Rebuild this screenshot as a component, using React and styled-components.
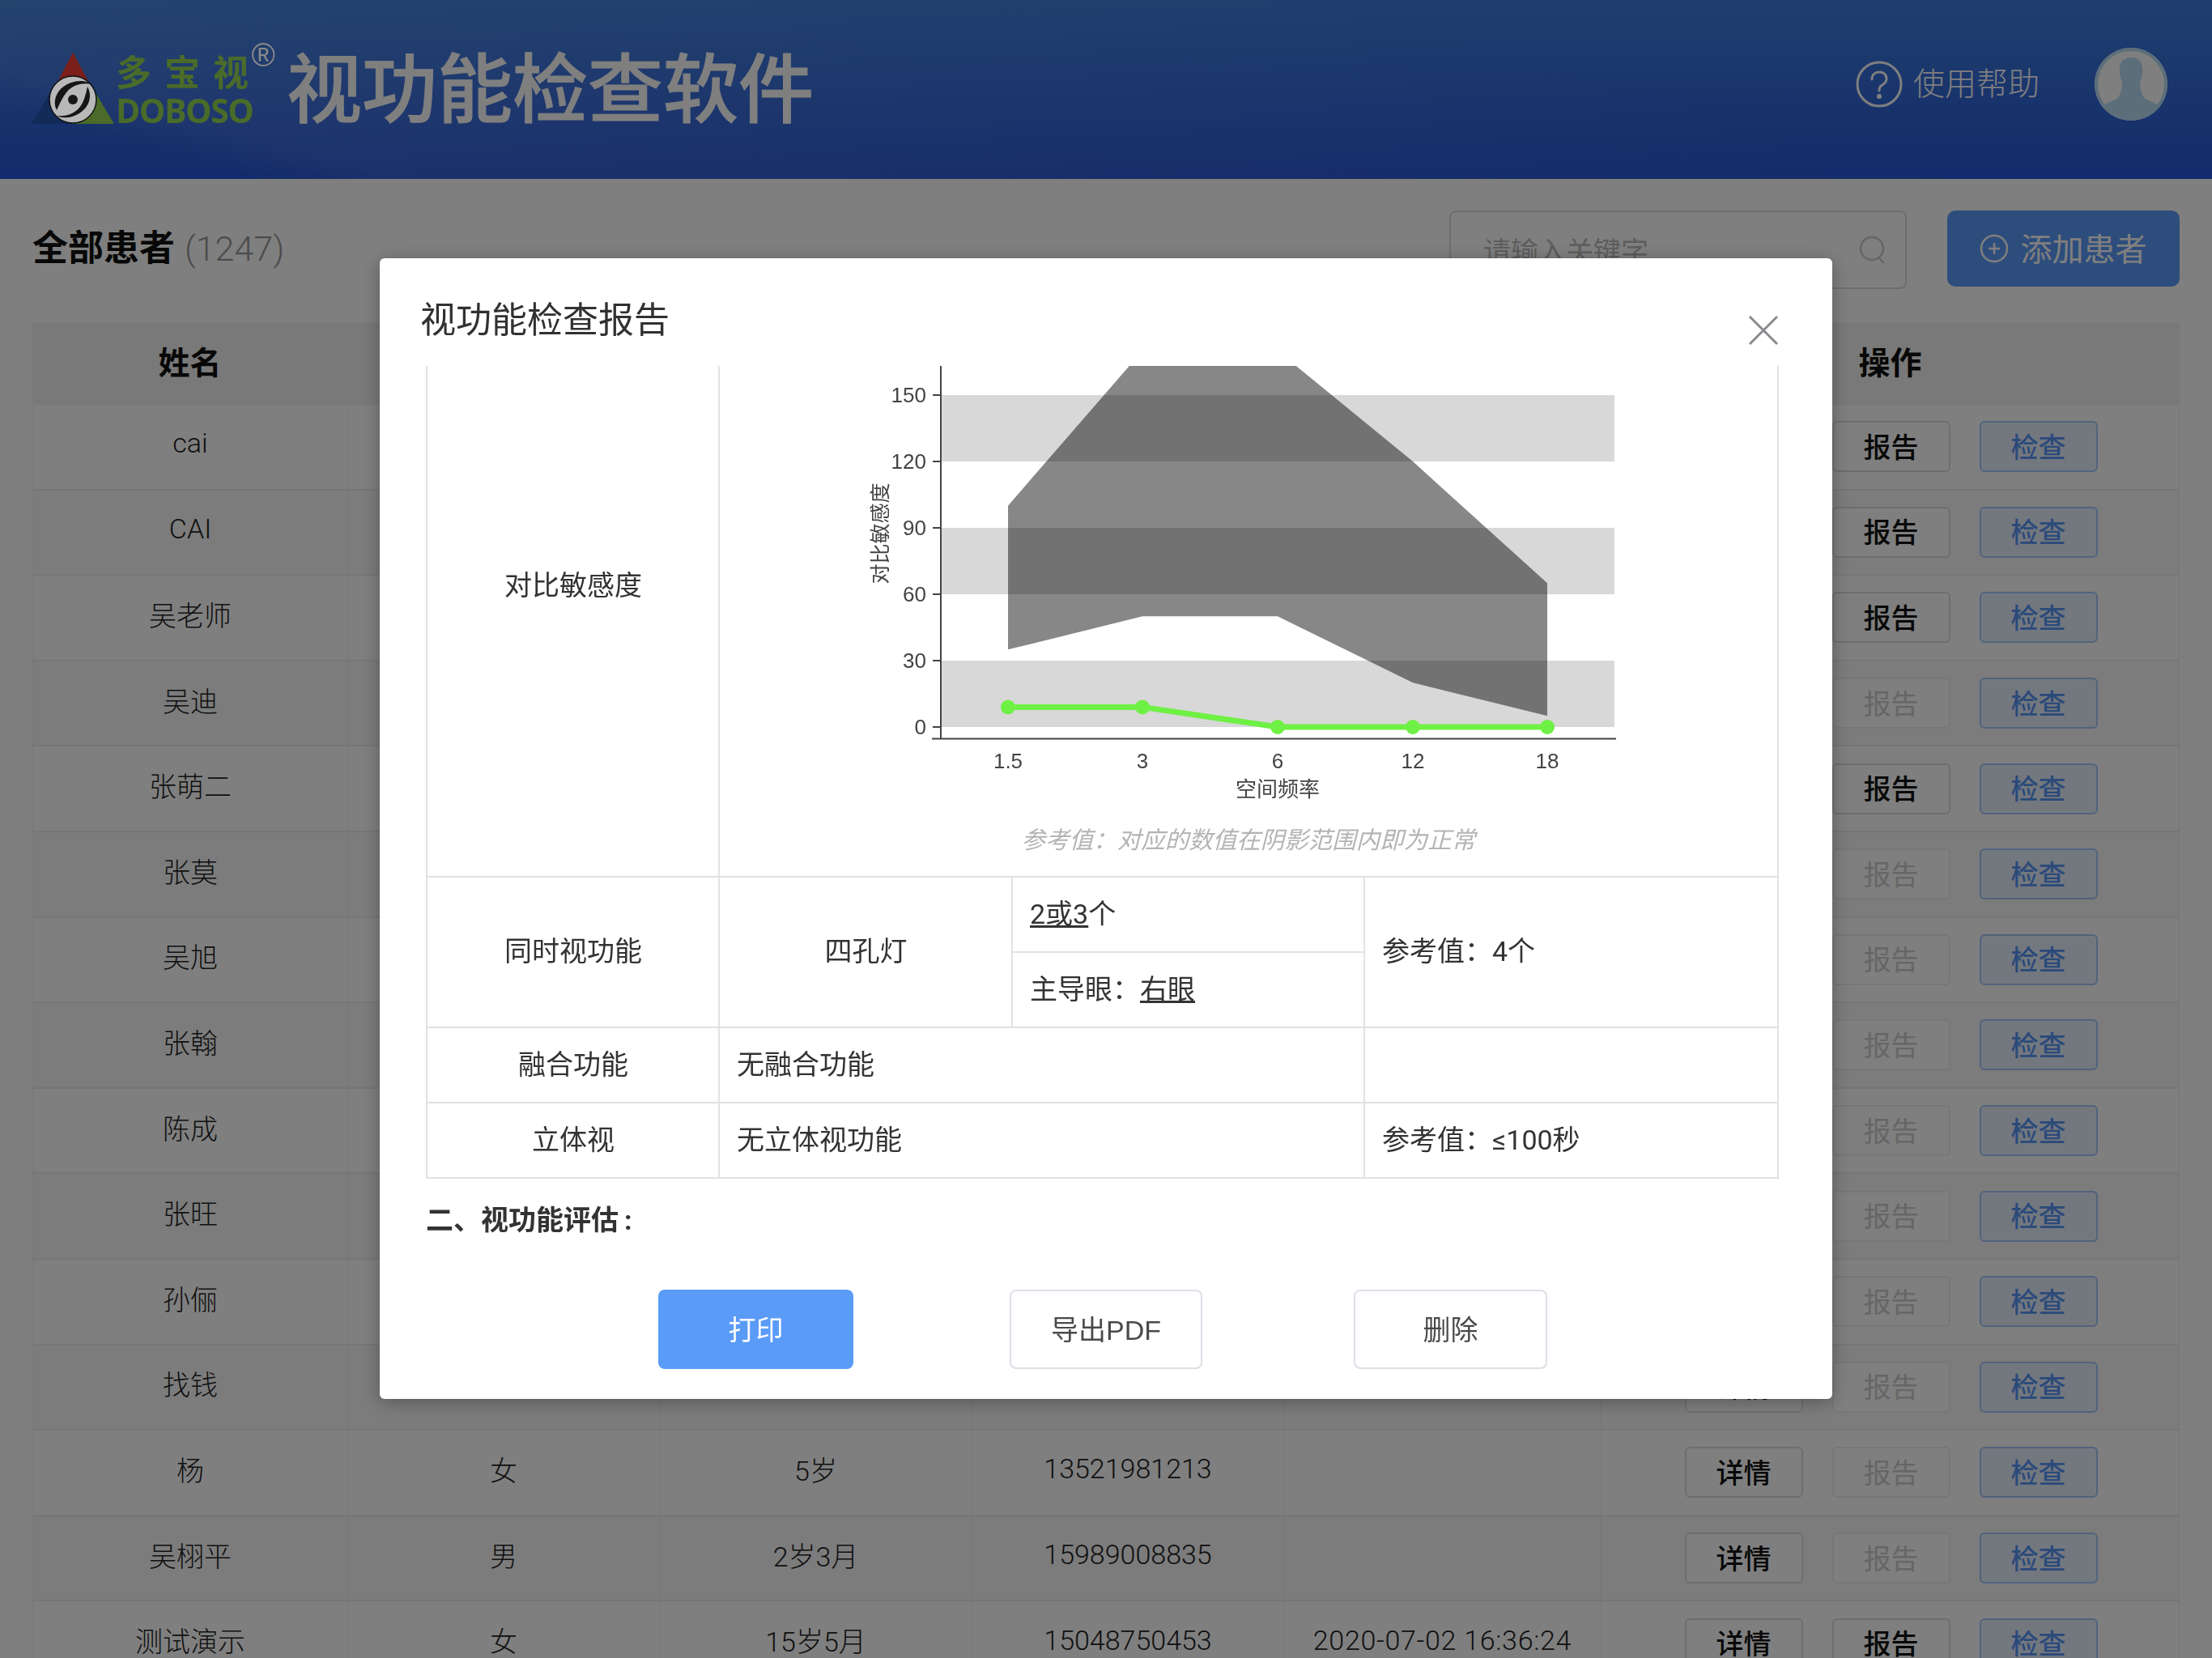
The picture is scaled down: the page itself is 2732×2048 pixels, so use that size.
import React from 'react'
import styled, { createGlobalStyle } from 'styled-components'

const GlobalStyle = createGlobalStyle`
    html, body {
        margin: 0;
        padding: 0;
        background: #fff;
    }
    body {
        width: 2732px;
        height: 2048px;
        overflow: hidden;
        font-family: Roboto, "Noto Sans CJK SC", sans-serif;
        color: #333;
    }
    * {
        box-sizing: border-box;
    }
`

const Page = styled.div`
    width: 2732px;
    height: 2048px;
    overflow: hidden;
`

const Header = styled.header`
    height: 221px;
    padding: 0 0 14px 39px;
    display: flex;
    align-items: center;
    background:
        linear-gradient(195.6deg, rgba(255,255,255,0) 30%, rgba(255,255,255,.07) 86%, rgba(255,255,255,0) 91%),
        linear-gradient(180deg, #3f7fdc 0%, #2756d6 100%);
`

const Logo = styled.div`
    display: flex;
    align-items: flex-end;
    position: relative;
    z-index: 2;
    height: 88px;
    margin: 11px 39px 0 0;
`

const LogoWords = styled.div`
    margin: 0 0 -1px 1px;
    width: 172px;
    color: #4a6b2a;
    font-weight: 700;
`

const LogoCn = styled.div`
    font-size: 44px;
    line-height: 54px;
    letter-spacing: 16px;
    white-space: nowrap;
`

const LogoEn = styled.div`
    font-family: "Open Sans", sans-serif;
    font-size: 41px;
    line-height: 36px;
    letter-spacing: -1.5px;
`

const Registered = styled.span`
    position: absolute;
    right: -25px;
    top: -20px;
    font-size: 40px;
    line-height: 46px;
    color: #8a8a8a;
    font-family: "Liberation Sans", sans-serif;
`

const AppName = styled.h1`
    margin: 0;
    font-size: 93px;
    line-height: 110px;
    font-weight: 500;
    color: #fff;
    -webkit-text-stroke: 1px #fff;
    font-family: "Noto Sans CJK SC", sans-serif;
`

const HeaderRight = styled.div`
    margin-left: auto;
    display: flex;
    align-items: center;
    padding-right: 55px;
`

const HelpLink = styled.div`
    display: flex;
    align-items: center;
    gap: 13px;
    color: #fff;
    font-size: 39px;
    margin-right: 68px;
    font-weight: 300;
`

const HelpLabel = styled.span`
    margin-bottom: 8px;
`

const Avatar = styled.div`
    width: 90px;
    height: 90px;
    border-radius: 50%;
    overflow: hidden;
`

const Content = styled.main`
    padding: 39px 40px 0;
`

const TopBar = styled.div`
    display: flex;
    align-items: flex-start;
    height: 138px;
`

const PageTitle = styled.div`
    display: flex;
    align-items: baseline;
    gap: 12px;
    margin-top: 17px;
    font-size: 44px;
    line-height: 60px;
    font-weight: 700;
    color: #111;
`

const Count = styled.span`
    font-size: 43px;
    font-weight: 300;
    color: #999;
`

const SearchBox = styled.div`
    margin-left: auto;
    width: 565px;
    height: 97px;
    padding: 0 23px 0 40px;
    border: 2px solid #ddd;
    border-radius: 8px;
    display: flex;
    align-items: center;
    justify-content: space-between;
    font-size: 34px;
    color: #bbb;
`

const AddButton = styled.div`
    width: 287px;
    height: 94px;
    margin-left: 50px;
    border-radius: 10px;
    background: #5b9bf8;
    color: #fff;
    display: flex;
    align-items: center;
    justify-content: center;
    gap: 14px;
    font-size: 39px;
`

const AddLabel = styled.span`
    margin-bottom: 4px;
`

const TableHead = styled.div`
    display: grid;
    grid-template-columns: 389px 385px 386px 385px 392px 715px;
    height: 102px;
    padding-bottom: 8px;
    background: #f2f2f2;
    align-items: center;
    text-align: center;
    font-size: 39px;
    font-weight: 700;
    color: #111;
`

const Row = styled.div`
    display: grid;
    grid-template-columns: 389px 385px 386px 385px 392px 715px;
    height: 105.6px;
    background: ${props => (props.$alt ? '#f8f8f8' : '#fff')};
    border-bottom: 2px solid #ebedf3;
    border-left: 1px solid #f0f0f4;
    border-right: 1px solid #f0f0f4;
`

const Cell = styled.div`
    display: flex;
    align-items: center;
    justify-content: center;
    padding-bottom: 9px;
    border-right: 1px solid #ebedf3;
    font-size: 34px;
    font-weight: 300;
    letter-spacing: ${props => (props.$wide ? '.7px' : '0')};
    color: #222;
`

const Actions = styled.div`
    display: flex;
    align-items: center;
    justify-content: center;
    gap: 36px;
`

const SmallButton = styled.div`
    width: 146px;
    height: 63px;
    padding-bottom: 3px;
    border-radius: 6px;
    border: 2px solid ${props => (props.$kind === 'blue' ? '#a3c6fb' : props.$kind === 'off' ? '#eee' : '#ddd')};
    background: ${props => (props.$kind === 'blue' ? '#e6f0fe' : '#fff')};
    color: ${props => (props.$kind === 'blue' ? '#5794f5' : props.$kind === 'off' ? '#ccc' : '#111')};
    display: flex;
    align-items: center;
    justify-content: center;
    font-size: 34px;
    font-weight: ${props => (props.$kind === 'off' ? 400 : 500)};
`

const Overlay = styled.div`
    position: fixed;
    inset: 0;
    z-index: 1;
    background: rgba(0, 0, 0, .5);
`

const Modal = styled.section`
    position: fixed;
    left: 469px;
    top: 319px;
    z-index: 3;
    width: 1794px;
    height: 1409px;
    background: #fff;
    border-radius: 6px;
    box-shadow: 0 4px 22px rgba(0, 0, 0, .3);
    display: flex;
    flex-direction: column;
`

const ModalHead = styled.div`
    flex: none;
    height: 133px;
    padding: 42px 66px 0 50px;
    display: flex;
    justify-content: space-between;
    align-items: flex-start;
`

const ModalTitle = styled.h2`
    margin: 0;
    font-size: 44px;
    line-height: 62px;
    font-weight: 400;
    color: #303133;
    font-family: "Noto Sans CJK SC", sans-serif;
`

const CloseIcon = styled.svg`
    width: 38px;
    height: 38px;
    margin-top: 28px;
`

const ModalBody = styled.div`
    flex: 1;
    min-height: 0;
    overflow: hidden;
    padding: 0 57px;
`

const ReportTable = styled.table`
    width: 1669px;
    margin-top: -88px;
    table-layout: fixed;
    border-collapse: collapse;
    font-size: 34px;
    color: #333;
`

const Td = styled.td`
    border: 2px solid #e2e2e2;
    height: ${props => props.$h || 93}px;
    padding: ${props => (props.$flush ? '0' : '0 20px 7px 21px')};
    text-align: ${props => (props.$center ? 'center' : 'left')};
    vertical-align: ${props => (props.$flush ? 'bottom' : 'middle')};
`

const Value = styled.span`
    text-decoration: underline;
`

const ChartSvg = styled.svg`
    display: block;
    width: 1308px;
    height: 560px;
`

const ChartNote = styled.div`
    height: 70px;
    padding-bottom: 16px;
    line-height: 52px;
    text-align: center;
    font-size: 29.5px;
    font-style: italic;
    color: #b4b4b4;
`

const SectionTitle = styled.h3`
    margin: 26px 0 0;
    font-size: 34px;
    line-height: 50px;
    font-weight: 700;
    color: #333;
`

const ModalFooter = styled.div`
    flex: none;
    height: 99px;
    margin-bottom: 36px;
    padding-left: 344px;
    display: flex;
`

const FooterButton = styled.div`
    width: ${props => props.$w}px;
    height: 98px;
    margin-left: ${props => props.$gap || 0}px;
    padding-bottom: 3px;
    border-radius: 8px;
    border: ${props => (props.$primary ? 'none' : '2px solid #dcdfe6')};
    background: ${props => (props.$primary ? '#5b9bf8' : '#fff')};
    color: ${props => (props.$primary ? '#fff' : '#4a4a4a')};
    display: flex;
    align-items: center;
    justify-content: center;
    font-family: "Liberation Sans", "Noto Sans CJK SC", sans-serif;
    font-size: 34px;
`

const patients = [
    ['cai', '', '', '', '', true],
    ['CAI', '', '', '', '', true],
    ['吴老师', '', '', '', '', true],
    ['吴迪', '', '', '', '', false],
    ['张萌二', '', '', '', '', true],
    ['张莫', '', '', '', '', false],
    ['吴旭', '', '', '', '', false],
    ['张翰', '', '', '', '', false],
    ['陈成', '', '', '', '', false],
    ['张旺', '', '', '', '', false],
    ['孙俪', '', '', '', '', false],
    ['找钱', '', '', '', '', false],
    ['杨', '女', '5岁', '13521981213', '', false],
    ['吴栩平', '男', '2岁3月', '15989008835', '', false],
    ['测试演示', '女', '15岁5月', '15048750453', '2020-07-02 16:36:24', true],
]

const LogoMark = () => (
    <svg width="103" height="88" viewBox="0 0 103 88">
        <polygon points="51,0 27,46 76,46" fill="#7a1f1a" />
        <polygon points="0,88 27,43 52,88" fill="#112a58" />
        <polygon points="102,88 75,43 50,88" fill="#4a6b2a" />
        <circle cx="51" cy="58" r="29" fill="#b8b8b8" stroke="#111" strokeWidth="1.5" />
        <path d="M31 71C25 60 31 43 49 37c9-3 18-3 25 2-10-2-22 0-30 9-6 7-9 15-13 23z" fill="#161616" />
        <path d="M69 42c7 12 2 29-16 36-8 3-15 3-22 0 10 1 20-1 28-10 6-7 8-17 10-26z" fill="#161616" />
        <circle cx="51" cy="58" r="6" fill="#161616" />
    </svg>
)

const HelpIcon = () => (
    <svg width="58" height="58" viewBox="0 0 58 58" fill="none" stroke="#fff" strokeWidth="3">
        <circle cx="29" cy="29" r="27" />
        <path d="M20 23c0-6 4-9 9-9s9 3 9 8c0 4-2 6-5 8-3 1-4 3-4 7" strokeLinecap="round" />
        <circle cx="29" cy="44" r="1.6" fill="#fff" />
    </svg>
)

const AvatarIcon = () => (
    <svg width="90" height="90" viewBox="0 0 90 90">
        <rect width="90" height="90" fill="#fff" />
        <path d="M45 12c-11 0-15 8-14 18 0 6 3 10 3 15 0 6-2 12-6 18l-20 9c9 11 23 17 37 17s28-6 37-17l-20-9c-4-6-6-12-6-18 0-5 3-9 3-15 1-10-3-18-14-18z" fill="#b7dcf4" />
        <circle cx="45" cy="45" r="43" fill="none" stroke="#b7dcf4" strokeWidth="4" />
    </svg>
)

const SearchIcon = () => (
    <svg width="34" height="38" viewBox="0 0 34 38" fill="none" stroke="#ccc" strokeWidth="2.5">
        <circle cx="16" cy="17" r="14" />
        <path d="M25 29l5 5" strokeLinecap="round" />
    </svg>
)

const PlusIcon = () => (
    <svg width="36" height="36" viewBox="0 0 36 36" fill="none" stroke="#fff" strokeWidth="2.5">
        <circle cx="18" cy="18" r="16" />
        <path d="M18 11v14M11 18h14" />
    </svg>
)

const xs = [1244, 1410, 1577, 1744, 1910]
const xLabels = ['1.5', '3', '6', '12', '18']
const yOf = value => 898 - value * (82 / 30)
const upper = [100, 170, 170, 120, 65]
const lower = [35, 50, 50, 20, 5]
const measured = [9, 9, 0, 0, 0]

const toPoints = values => values.map((v, i) => `${xs[i]},${yOf(v)}`)

const SensitivityChart = () => (
    <ChartSvg viewBox="888 452 1308 560">
        {[150, 90, 30].map(v => (
            <rect key={v} x="1161" y={yOf(v)} width="832" height="82" fill="#d8d8d8" />
        ))}
        <polygon
            points={[...toPoints(upper), ...toPoints(lower).reverse()].join(' ')}
            fill="rgba(0,0,0,.47)"
        />
        <polyline
            points={toPoints(measured).join(' ')}
            fill="none"
            stroke="#6ff044"
            strokeWidth="7"
        />
        {measured.map((v, i) => (
            <circle key={i} cx={xs[i]} cy={yOf(v)} r="9" fill="#6ff044" />
        ))}
        <path d="M1161 452V913M1150 912.5H1995" stroke="#444" strokeWidth="2" fill="none" />
        {[0, 30, 60, 90, 120, 150].map(v => (
            <g key={v}>
                <path d={`M1151 ${yOf(v)}H1161`} stroke="#444" strokeWidth="2" />
                <text x="1143" y={yOf(v) + 9} textAnchor="end" fontSize="26" fill="#444" fontFamily="Liberation Sans">
                    {v}
                </text>
            </g>
        ))}
        {xLabels.map((label, i) => (
            <text key={label} x={xs[i]} y="949" textAnchor="middle" fontSize="26" fill="#444" fontFamily="Liberation Sans">
                {label}
            </text>
        ))}
        <text x="1577" y="984" textAnchor="middle" fontSize="26" fill="#444" fontFamily="Noto Sans CJK SC">
            空间频率
        </text>
        <text
            transform="translate(1095 659) rotate(-90)"
            textAnchor="middle"
            fontSize="25"
            fill="#444"
            fontFamily="Noto Sans CJK SC"
        >
            对比敏感度
        </text>
    </ChartSvg>
)

const App = () => {
    return (
        <>
            <GlobalStyle />
            <Page>
                <Header>
                    <Logo>
                        <LogoMark />
                        <LogoWords>
                            <LogoCn>多宝视</LogoCn>
                            <LogoEn>DOBOSO</LogoEn>
                        </LogoWords>
                        <Registered>®</Registered>
                    </Logo>
                    <AppName>视功能检查软件</AppName>
                    <HeaderRight>
                        <HelpLink>
                            <HelpIcon />
                            <HelpLabel>使用帮助</HelpLabel>
                        </HelpLink>
                        <Avatar>
                            <AvatarIcon />
                        </Avatar>
                    </HeaderRight>
                </Header>

                <Content>
                    <TopBar>
                        <PageTitle>
                            全部患者 <Count>(1247)</Count>
                        </PageTitle>
                        <SearchBox>
                            请输入关键字
                            <SearchIcon />
                        </SearchBox>
                        <AddButton>
                            <PlusIcon />
                            <AddLabel>添加患者</AddLabel>
                        </AddButton>
                    </TopBar>

                    <TableHead>
                        <div>姓名</div>
                        <div>性别</div>
                        <div>年龄</div>
                        <div>手机号</div>
                        <div>最近检查</div>
                        <div>操作</div>
                    </TableHead>
                    {patients.map((p, i) => (
                        <Row key={p[0]} $alt={i % 2 === 1}>
                            <Cell>{p[0]}</Cell>
                            <Cell>{p[1]}</Cell>
                            <Cell>{p[2]}</Cell>
                            <Cell>{p[3]}</Cell>
                            <Cell $wide>{p[4]}</Cell>
                            <Actions>
                                <SmallButton>详情</SmallButton>
                                <SmallButton $kind={p[5] ? undefined : 'off'}>报告</SmallButton>
                                <SmallButton $kind="blue">检查</SmallButton>
                            </Actions>
                        </Row>
                    ))}
                </Content>
            </Page>

            <Overlay />

            <Modal>
                <ModalHead>
                    <ModalTitle>视功能检查报告</ModalTitle>
                    <CloseIcon viewBox="0 0 38 38" fill="none" stroke="#8a8a8e" strokeWidth="3">
                        <path d="M2 2l34 34M36 2L2 36" />
                    </CloseIcon>
                </ModalHead>
                <ModalBody>
                    <ReportTable>
                        <colgroup>
                            <col width="361" />
                            <col width="362" />
                            <col width="435" />
                            <col width="511" />
                        </colgroup>
                        <tbody>
                            <tr>
                                <Td $center $h={718}>对比敏感度</Td>
                                <Td colSpan={3} $flush $h={718}>
                                    <SensitivityChart />
                                    <ChartNote>{'参考值\uFF1A对应的数值在阴影范围内即为正常'}</ChartNote>
                                </Td>
                            </tr>
                            <tr>
                                <Td $center rowSpan={2}>同时视功能</Td>
                                <Td $center rowSpan={2}>四孔灯</Td>
                                <Td><Value>2或3</Value>个</Td>
                                <Td rowSpan={2}>{'参考值\uFF1A4个'}</Td>
                            </tr>
                            <tr>
                                <Td>{'主导眼\uFF1A'}<Value>右眼</Value></Td>
                            </tr>
                            <tr>
                                <Td $center>融合功能</Td>
                                <Td colSpan={2}>无融合功能</Td>
                                <Td />
                            </tr>
                            <tr>
                                <Td $center>立体视</Td>
                                <Td colSpan={2}>无立体视功能</Td>
                                <Td>{'参考值\uFF1A≤100秒'}</Td>
                            </tr>
                        </tbody>
                    </ReportTable>
                    <SectionTitle>{'二、视功能评估\u2009:'}</SectionTitle>
                </ModalBody>
                <ModalFooter>
                    <FooterButton $primary $w={241}>打印</FooterButton>
                    <FooterButton $w={238} $gap={193}>导出PDF</FooterButton>
                    <FooterButton $w={239} $gap={187}>删除</FooterButton>
                </ModalFooter>
            </Modal>
        </>
    )
}

export default App
